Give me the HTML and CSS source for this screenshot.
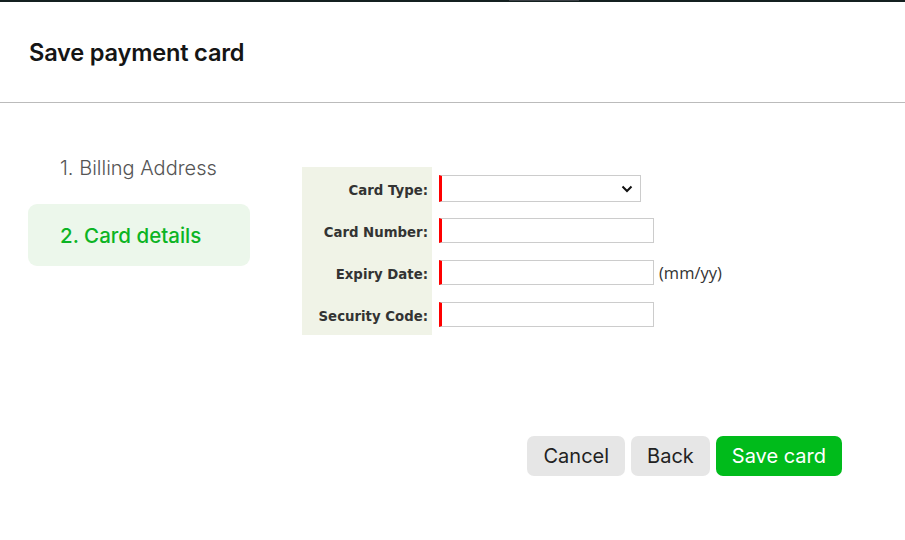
FILE: index.html
```html
<!DOCTYPE html>
<html lang="en">
<head>
  <meta charset="UTF-8" />
  <title>Save payment card</title>
  <link rel="stylesheet" href="styles.css">
</head>
<body>
  <div class="topbar"><span class="topbar-tab"></span></div>

  <div class="header">
    <h1>Save payment card</h1>
  </div>

  <div class="main">
    <div class="steps">
      <div class="step">1. Billing Address</div>
      <div class="step active">2. Card details</div>
    </div>

    <form class="card-form">
      <label class="field-label" for="card-type">Card Type:</label>
      <div class="field">
        <div class="select-wrap">
          <select id="card-type" class="req"></select>
          <svg class="chevron" width="12" height="8" viewBox="0 0 12 8">
            <path d="M1.5 1.5 L6 6 L10.5 1.5" fill="none" stroke="#111" stroke-width="2"/>
          </svg>
        </div>
      </div>

      <label class="field-label" for="card-number">Card Number:</label>
      <div class="field"><input type="text" id="card-number" class="req" /></div>

      <label class="field-label" for="expiry">Expiry Date:</label>
      <div class="field"><input type="text" id="expiry" class="req" /><span class="hint">(mm/yy)</span></div>

      <label class="field-label" for="security">Security Code:</label>
      <div class="field"><input type="text" id="security" class="req" /></div>
    </form>
  </div>

  <div class="actions">
    <button class="btn">Cancel</button>
    <button class="btn">Back</button>
    <button class="btn primary">Save card</button>
  </div>
</body>
</html>
```

FILE: styles.css
```css
body {
  margin: 0;
  font-family: Inter, "Noto Sans", sans-serif;
  color: #111;
  background: #fff;
}
.topbar {
  height: 2px;
  background-color: #142020;
  position: relative;
}
.topbar-tab {
  position: absolute;
  left: 509px;
  top: 0;
  width: 70px;
  height: 1px;
  background-color: #3a3f44;
}
.header {
  height: 100px;
  border-bottom: 1px solid #bbb;
  display: flex;
  align-items: center;
  padding-left: 29px;
}
.header h1 {
  margin: 0;
  font-size: 23.6px;
  font-weight: 600;
  letter-spacing: -0.2px;
  color: #151515;
}
.main {
  display: flex;
  padding: 34px 0 0 28px;
}
.steps {
  width: 222px;
  display: flex;
  flex-direction: column;
  gap: 5px;
}
.step {
  height: 62px;
  display: flex;
  align-items: center;
  padding-left: 32px;
  font-size: 20px;
  font-weight: 300;
  color: #555;
  border-radius: 9px;
}
.step.active {
  background-color: #ecf7eb;
  color: #0cb424;
  font-weight: 500;
  font-size: 20.5px;
}
.card-form {
  margin-left: 52px;
  margin-top: 30px;
  display: grid;
  grid-template-columns: 130px auto;
  grid-auto-rows: 42px;
  align-self: flex-start;
}
.field-label {
  background-color: #f0f3e7;
  font-family: "DejaVu Sans", Verdana, sans-serif;
  font-size: 13.3px;
  font-weight: bold;
  color: #333;
  display: flex;
  align-items: center;
  justify-content: flex-end;
  padding: 5px 4px 0 0;
}
.field {
  display: flex;
  align-items: center;
  padding-left: 7px;
}
.field input {
  width: 215px;
  height: 25px;
  box-sizing: border-box;
  margin: 0;
  border: 1px solid #ccc;
  border-left: 3px solid #f00;
  font-size: 13px;
  padding: 2px 4px;
}
.select-wrap {
  position: relative;
}
.select-wrap select {
  appearance: none;
  width: 202px;
  height: 27px;
  margin: 0;
  box-sizing: border-box;
  border: 1px solid #ccc;
  border-left: 3px solid #f00;
  background: #fff;
  border-radius: 0;
}
.chevron {
  position: absolute;
  right: 8px;
  top: 10px;
  pointer-events: none;
}
.hint {
  margin-left: 5px;
  font-family: "Open Sans", sans-serif;
  font-size: 16.5px;
  color: #333;
}
.actions {
  display: flex;
  justify-content: flex-end;
  gap: 6px;
  padding: 0 63px 0 0;
  margin-top: 101px;
}
.btn {
  height: 40px;
  padding: 0 16px;
  border: none;
  border-radius: 7px;
  background-color: #e6e6e6;
  color: #222;
  font-family: Inter, "Noto Sans", sans-serif;
  font-size: 20px;
  cursor: pointer;
}
.btn.primary {
  background-color: #00bb1b;
  color: #fff;
}
```
